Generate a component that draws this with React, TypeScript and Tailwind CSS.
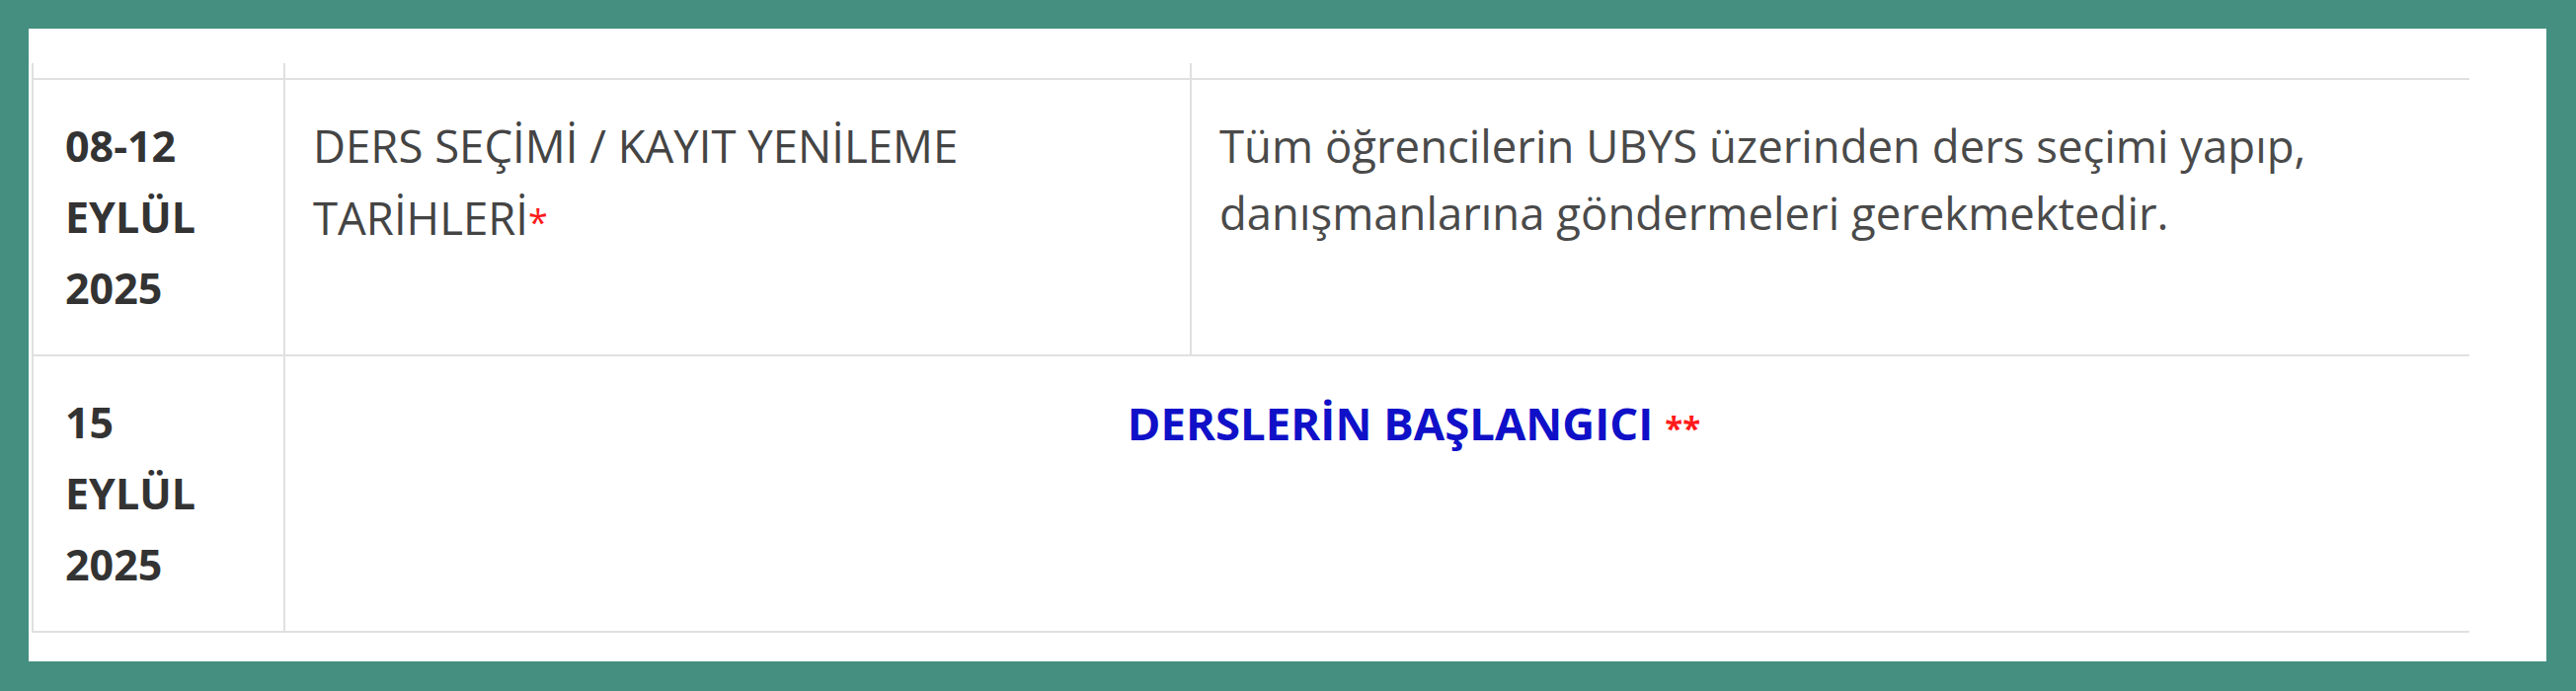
import React from "react";

const sans = "font-['Open_Sans',_'Noto_Sans',sans-serif]";

const App: React.FC = () => {
    return (
        <div className="w-[2609px] h-[700px] bg-[#458f81] pt-[29px] pl-[29px] pr-[30px] pb-[30px]">
            <div className={`h-full w-full bg-white pt-[35px] pl-[3px] ${sans}`}>
                <div className="w-[2469px]">
                    {/* tail of the row above, cut off */}
                    <div className="flex h-[15px]">
                        <div className="w-[257px] border-l-2 border-r-2 border-[#e0e0e0]" />
                        <div className="w-[918px] border-r-2 border-[#e0e0e0]" />
                        <div className="flex-1" />
                    </div>

                    <div className="flex border-t-2 border-b-2 border-[#e0e0e0]">
                        <div className="w-[257px] border-l-2 border-r-2 border-[#e0e0e0] pt-[31px] pb-[31px] pl-[32px] text-[43px] leading-[72px] font-bold text-[#333]">
                            <div>08-12</div>
                            <div>EYLÜL</div>
                            <div>2025</div>
                        </div>
                        <div className="w-[918px] border-r-2 border-[#e0e0e0] pt-[30px] pl-[28px] pr-[138px] text-[45.5px] leading-[73px] text-[#444]">
                            <span>DERS SEÇİMİ / KAYIT YENİLEME</span>{" "}
                            <span className="whitespace-nowrap">
                                TARİHLERİ<span className="text-[#ff1a1a] text-[36px]">*</span>
                            </span>
                        </div>
                        <div className="flex-1 pt-[32px] pl-[28px] pr-[20px] text-[45.5px] leading-[68px] text-[#4a4a4a]">
                            Tüm öğrencilerin UBYS üzerinden ders seçimi yapıp, danışmanlarına göndermeleri gerekmektedir.
                        </div>
                    </div>

                    <div className="flex border-b-2 border-[#e0e0e0]">
                        <div className="w-[257px] border-l-2 border-r-2 border-[#e0e0e0] pt-[31px] pb-[31px] pl-[32px] text-[43px] leading-[72px] font-bold text-[#333]">
                            <div>15</div>
                            <div>EYLÜL</div>
                            <div>2025</div>
                        </div>
                        <div className="flex-1 pt-[31px] pl-[74px] text-center text-[45.5px] leading-[72px] font-bold">
                            <span className="text-[#1010c8]">DERSLERİN BAŞLANGICI</span>{" "}
                            <span className="text-[#ff1a1a] text-[33px]">**</span>
                        </div>
                    </div>
                </div>
            </div>
        </div>
    );
};

export default App;
